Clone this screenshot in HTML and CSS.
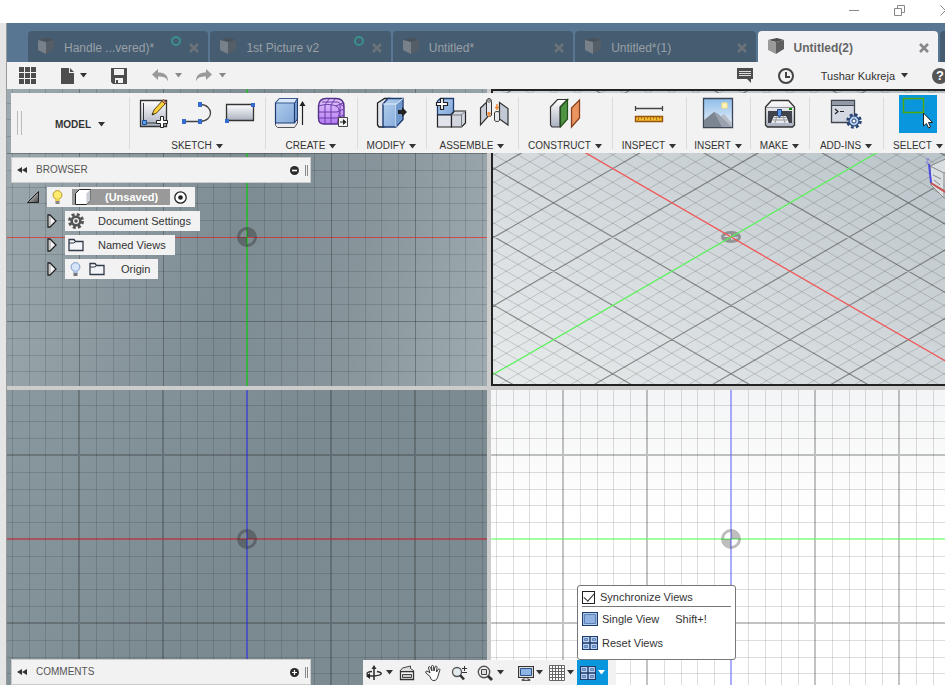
FILE: index.html
```html
<!DOCTYPE html>
<html lang="en">
<head>
<meta charset="utf-8">
<title>Untitled(2)</title>
<link rel="stylesheet" href="styles.css">
</head>
<body>
<svg class="defs" aria-hidden="true">
  <defs>
    <linearGradient id="steel" x1="0" y1="0" x2="0" y2="1"><stop offset="0" stop-color="#fff"/><stop offset="1" stop-color="#a9b0bf"/></linearGradient>
    <linearGradient id="blue" x1="0" y1="0" x2="1" y2="1"><stop offset="0" stop-color="#b4cfee"/><stop offset="1" stop-color="#7fa6d8"/></linearGradient>
    <linearGradient id="violet" x1="0" y1="0" x2="0" y2="1"><stop offset="0" stop-color="#e3c6fb"/><stop offset="1" stop-color="#b57af2"/></linearGradient>
    <linearGradient id="sky" x1="0" y1="0" x2="0" y2="1"><stop offset="0" stop-color="#8fbde8"/><stop offset="1" stop-color="#eef5fc"/></linearGradient>
    <linearGradient id="dark" x1="0" y1="0" x2="1" y2="1"><stop offset="0" stop-color="#eee"/><stop offset="1" stop-color="#444"/></linearGradient>
  </defs>
  <symbol id="caret" viewBox="0 0 7 5"><path d="M0 0h7L3.500 4.500z" fill="currentColor"/></symbol>
  <symbol id="cube" viewBox="0 0 16 16"><path d="M0 2 9 0l7 2-8 2z" fill="#4c4c4c"/><path d="M0 2l8 2v12l-8-4z" fill="#9a9a9a"/><path d="M8 4l8-2v9l-8 5z" fill="#5f5f5f"/></symbol>
  <symbol id="cross" viewBox="0 0 10 10"><path d="M1 1l8 8M9 1 1 9" stroke="currentColor" stroke-width="2.600"/></symbol>
  <symbol id="expand" viewBox="0 0 10 14"><path d="M1 1h2l6 6-6 6H1z" fill="#f4f4f4" stroke="#222" stroke-width="1.300"/><path d="M3 2v10" stroke="#999"/></symbol>
  <symbol id="folder" viewBox="0 0 16 14"><path d="M1 12.500V1.500h5l1.500 2H15v9z" fill="#f3f4f8" stroke="#333a4a" stroke-width="1.300"/><path d="M1 5h5l1.500-1.500" fill="none" stroke="#333a4a"/></symbol>
  <symbol id="rewind" viewBox="0 0 10 8"><path d="M5 1v6L0 4zM10 1v6L5 4z" fill="#333"/></symbol>
  <symbol id="quad" viewBox="0 0 16 14"><path d="M.5.5h15v13H.5z" fill="#bcd2ee" stroke="#1d3a6b" stroke-width="1.200"/><path d="M8 0v14M0 7h16" stroke="#1d3a6b" stroke-width="1.400"/><path d="M2.500 2.500h3v2h-3zM10.500 2.500h3v2h-3zM2.500 9.500h3v2h-3zM10.500 9.500h3v2h-3z" fill="#8fb2e0" stroke="#5e82b8"/></symbol>
</svg>

<header class="titlebar">
  <button aria-label="Minimize"><svg width="10" height="10"><path d="M0 5.500h10" stroke="#888"/></svg></button>
  <button aria-label="Restore"><svg width="11" height="11"><path d="M.5 3.500h7v7h-7zM3.500 3V.5h7v7H8" fill="none" stroke="#888"/></svg></button>
  <button aria-label="Close"><svg width="11" height="11"><path d="M.5.5l10 10M10.500.5l-10 10" stroke="#888"/></svg></button>
</header>

<div class="app">
  <nav class="tabs" aria-label="Documents">
    <div class="tab"><svg class="tab-cube"><use href="#cube"/></svg><a href="#handle">Handle ...vered)*</a><i class="sync"></i><button aria-label="Close tab"><svg width="10" height="10"><use href="#cross"/></svg></button></div>
    <div class="tab"><svg class="tab-cube"><use href="#cube"/></svg><a href="#first">1st Picture v2</a><i class="sync"></i><button aria-label="Close tab"><svg width="10" height="10"><use href="#cross"/></svg></button></div>
    <div class="tab"><svg class="tab-cube"><use href="#cube"/></svg><a href="#untitled">Untitled*</a><button aria-label="Close tab"><svg width="10" height="10"><use href="#cross"/></svg></button></div>
    <div class="tab"><svg class="tab-cube"><use href="#cube"/></svg><a href="#untitled1">Untitled*(1)</a><button aria-label="Close tab"><svg width="10" height="10"><use href="#cross"/></svg></button></div>
    <div class="tab active"><svg class="tab-cube"><use href="#cube"/></svg><a href="#untitled2">Untitled(2)</a><button aria-label="Close tab"><svg width="10" height="10"><use href="#cross"/></svg></button></div>
    <div class="tab"></div>
  </nav>

  <div class="quickbar">
    <button aria-label="Data panel"><svg width="17" height="17"><path d="M0 0h5v5H0zM6 0h5v5H6zM12 0h5v5h-5zM0 6h5v5H0zM6 6h5v5H6zM12 6h5v5h-5zM0 12h5v5H0zM6 12h5v5H6zM12 12h5v5h-5z" fill="#4d4d4d"/></svg></button>
    <button class="file" aria-label="File"><svg width="13" height="16"><path d="M0 0h8v5h5v11H0z" fill="#4d4d4d"/><path d="M9 0l4 4H9z" fill="#4d4d4d"/></svg><svg class="caret"><use href="#caret"/></svg></button>
    <button class="save" aria-label="Save"><svg width="16" height="16"><path d="M0 0h16v16H2l-2-2z" fill="#4d4d4d"/><path d="M3 1h10v6H3zM4 10h8v5H4z" fill="#f2f2f2"/><path d="M5 12h2v3H5z" fill="#4d4d4d"/></svg></button>
    <button class="undo" aria-label="Undo"><svg width="17" height="13"><path d="M0 5.500 6 0v3.500c6 0 10 2 10 9-1.500-4-4-5-10-5V11z" fill="#999"/></svg><svg class="caret"><use href="#caret"/></svg></button>
    <button class="redo" aria-label="Redo"><svg width="17" height="13"><path d="M16 5.500 10 0v3.500c-6 0-10 2-10 9 1.500-4 4-5 10-5V11z" fill="#999"/></svg><svg class="caret"><use href="#caret"/></svg></button>
    <span class="spacer"></span>
    <button aria-label="Notifications"><svg width="16" height="15"><path d="M0 0h16v11h-2v4l-4-4H0z" fill="#4d4d4d"/><path d="M2 3.500h12M2 5.500h12M2 7.500h12" stroke="#ddd"/></svg></button>
    <button class="clock" aria-label="Job status"><svg width="16" height="16"><circle cx="8" cy="8" r="7" fill="none" stroke="#444" stroke-width="2"/><path d="M8 4v5h4" fill="none" stroke="#444" stroke-width="2"/></svg></button>
    <button class="user">Tushar Kukreja<svg class="caret"><use href="#caret"/></svg></button>
    <button class="help" aria-label="Help">?</button>
  </div>

  <main class="workspace">
    <div class="viewports">
      <svg class="view shaded" data-grid="square" data-h="#f00" data-v="#0c0" data-thin="1" viewBox="-240 -148 480 297" preserveAspectRatio="xMinYMid slice"></svg>
      <svg class="view iso" data-grid="iso" viewBox="-238 -146 452 293" preserveAspectRatio="xMinYMid slice"></svg>
      <svg class="view dim" data-grid="square" data-h="#c31f2a" data-v="#2a2ae0" viewBox="-240 -149 480 295" preserveAspectRatio="xMinYMid slice"></svg>
      <svg class="view light" data-grid="square" data-h="#5f5" data-v="#66f" viewBox="-240 -149 454 295" preserveAspectRatio="xMinYMid slice"></svg>
    </div>

    <div class="overlay">
      <div class="ribbon">
        <div class="workspace-pick"><i class="grip"></i><button>MODEL<svg class="caret"><use href="#caret"/></svg></button></div>

        <div class="group">
          <div class="icons">
            <button aria-label="Create sketch"><svg width="32" height="32"><path d="M2.500 3.500h26v26h-26z" fill="url(#steel)" stroke="#333" stroke-width="1.300"/><path d="M5.500 6v18M8 26h15" stroke="#333" fill="none"/><path d="M4.500 23.500h4v4h-4z" fill="#5aa0e8" stroke="#1d4f9b"/><path d="M14 18l2-5L25 3l3 3-9.500 10z" fill="#fbd13a" stroke="#5a4310"/><path d="M24 4l1.500-1.500 3 3L27 7z" fill="#c9886c" stroke="#7c4a35"/><path d="M14 18l.8-2.200 1.400 1.400z" fill="#222"/><path d="M22.500 19.500h3v4h4v3h-4v4h-3v-4h-4v-3h4z" fill="#fff" stroke="#222"/></svg></button>
            <button aria-label="Spline"><svg width="32" height="32"><path d="M4 24.500h15c14 0 14-17 0-17" fill="none" stroke="#444" stroke-width="1.300"/><path d="M1 22h4v5H1zM17 22h4v5h-4zM17 5h4v5h-4z" fill="#356bcf"/></svg></button>
            <button aria-label="Rectangle"><svg width="32" height="32"><path d="M2.500 7.500h27v16h-27z" fill="url(#steel)" stroke="#333" stroke-width="1.300"/><path d="M1 22h4v4H1zM27 6h4v4h-4z" fill="#356bcf"/></svg></button>
          </div>
          <button class="label">SKETCH<svg class="caret"><use href="#caret"/></svg></button>
        </div>

        <div class="group">
          <div class="icons">
            <button aria-label="Extrude"><svg width="32" height="32"><path d="M1.500 25.500h19l3-4V26l-3 4.500h-17l-2-2z" fill="#e9e9ee" stroke="#555"/><path d="M1.500 6l4-4.500h18l-3 4.500v20h-19z" fill="url(#blue)" stroke="#1e3c72" stroke-width="1.200"/><path d="M20.500 6l3-4.500V22l-3 4z" fill="#7299cc" stroke="#1e3c72"/><path d="M1.500 6l4-4.500h18l-3 4.500z" fill="#d8e6f7" stroke="#3b5b90"/><path d="M28.500 28V6" stroke="#222" stroke-width="1.200"/><path d="M28.500 4l3 5h-6z" fill="#222"/></svg></button>
            <button aria-label="Create form"><svg width="32" height="32"><path d="M1.500 9C2 3 5 1.500 9 1.500h10c6 0 8 3 8 8V20c0 5-4 7-7 7H7c-4 0-5.500-2-5.500-6z" fill="url(#violet)" stroke="#53308c" stroke-width="1.400"/><path d="M2 9c6-2 11-2 17 0s2 12 1 18M2 15h18l7-3M2 21h18l7-3M8 8v19M14 8v19M19 9l7-3M5 5h16l6 5M8 8l4-6M14 8l4-6M23 7v18" fill="none" stroke="#6a3daa"/><path d="M21.500 20.500h9v9h-9z" fill="#f2f2f2" stroke="#444"/><path d="M23 24.500h3V22l3.500 3-3.500 3v-2.500h-3z" fill="#222"/></svg></button>
          </div>
          <button class="label">CREATE<svg class="caret"><use href="#caret"/></svg></button>
        </div>

        <div class="group">
          <div class="icons">
            <button aria-label="Press pull"><svg width="32" height="32"><path d="M1.500 6l7-4.500h5L8 7v23H3l-1.500-2z" fill="#e2e5ec" stroke="#222" stroke-width="1.300"/><path d="M7 7l5-5.500h15v21L20 30H7z" fill="url(#blue)" stroke="#1e3c72" stroke-width="1.400"/><path d="M7 7h13l7-5.500M20 7v23" fill="none" stroke="#e3eefb"/><path d="M20 8l6-5v19l-6 7z" fill="#6f98cd"/><path d="M22 13h4v-3l5 5-5 5v-3h-4z" fill="#222"/></svg></button>
          </div>
          <button class="label">MODIFY<svg class="caret"><use href="#caret"/></svg></button>
        </div>

        <div class="group">
          <div class="icons">
            <button aria-label="New component"><svg width="32" height="32"><path d="M2.500 18V4l3-2.500h13V15l-3 3z" fill="url(#blue)" stroke="#1e3c72" stroke-width="1.300"/><path d="M2.500 18h14v12h-14z" fill="#e0e3ea" stroke="#222" stroke-width="1.200"/><path d="M16.500 18l3-4h11v12l-4 4h-10z" fill="#d2d6df" stroke="#222" stroke-width="1.200"/><path d="M16.500 18h10v12M26.500 18l4-4" fill="none" stroke="#777"/><path d="M5.500 1.500h3v4h4v3h-4v4h-3v-4h-4v-3h4z" fill="#fff" stroke="#222" stroke-width="1.200"/></svg></button>
            <button aria-label="Joint"><svg width="32" height="32"><path d="M2.500 11l7-6.500V20l-7 8z" fill="#c9ced8" stroke="#333" stroke-width="1.200"/><path d="M8.500 4.500c0-4 5-4 5 0V18c0 2-5 2-5 0z" fill="#e6e8ed" stroke="#333"/><ellipse cx="11" cy="4" rx="1.500" ry="1.200" fill="#fff" stroke="#555"/><path d="M21.500 5.500l8.500 6V28l-8.500-6z" fill="#c3c9d4" stroke="#333" stroke-width="1.200"/><path d="M16.500 16c0-2 5-2 5 0v7c0 2-5 2-5 0z" fill="#e6e8ed" stroke="#333"/><path d="M11 15v5M9 16.500h4M19 7v6M17 10.500h4" stroke="#f5822a" stroke-width="1.400"/></svg></button>
          </div>
          <button class="label">ASSEMBLE<svg class="caret"><use href="#caret"/></svg></button>
        </div>

        <div class="group">
          <div class="icons">
            <button aria-label="Offset plane"><svg width="32" height="32"><path d="M1.500 10l7-7.500h10L11 10v20H3l-1.500-2z" fill="url(#steel)" stroke="#333" stroke-width="1.200"/><path d="M11.500 10l7-7.500V22l-7 8z" fill="#4f9443" stroke="#234f1d" stroke-width="1.200"/><path d="M22.500 11l8-8v18l-8 9z" fill="#ea9560" stroke="#87401b" stroke-width="1.300"/></svg></button>
          </div>
          <button class="label">CONSTRUCT<svg class="caret"><use href="#caret"/></svg></button>
        </div>

        <div class="group">
          <div class="icons">
            <button aria-label="Measure"><svg width="32" height="32"><path d="M2 11.500h28M2.500 9v5M29.500 9v5" stroke="#444" stroke-width="1.300"/><path d="M2.500 19.500h27v5h-27z" fill="#f3b92c" stroke="#96540f" stroke-width="1.400"/><path d="M5.500 20v3M8.500 20v2M11.500 20v3M14.500 20v2M17.500 20v3M20.500 20v2M23.500 20v3M26.500 20v2" stroke="#a87a1c"/></svg></button>
          </div>
          <button class="label">INSPECT<svg class="caret"><use href="#caret"/></svg></button>
        </div>

        <div class="group">
          <div class="icons">
            <button aria-label="Insert image"><svg width="32" height="32"><path d="M1.500 1.500h29v29h-29z" fill="url(#sky)" stroke="#3c4656" stroke-width="1.300"/><path d="M20 6h5v5h-5z" fill="#fff6c4" stroke="#ffe37a"/><path d="M14 23l8-6 8 9v4H14z" fill="#b7bcc6"/><path d="M2 23l10-8 4 2 13 13H2z" fill="#7d8492"/><path d="M12 15l4 2 13 13h-9z" fill="#9ba1ae"/></svg></button>
          </div>
          <button class="label">INSERT<svg class="caret"><use href="#caret"/></svg></button>
        </div>

        <div class="group">
          <div class="icons">
            <button aria-label="3D print"><svg width="32" height="32"><path d="M1.500 10l6-6.500h17l6 6.500v18l-2 2h-25l-2-2z" fill="url(#steel)" stroke="#333" stroke-width="1.300"/><path d="M2 10.500h28" stroke="#999"/><path d="M4 14h24v12H4z" fill="#3f434c"/><path d="M7 26l3-7h12l3 7z" fill="#e6e8ed"/><path d="M10 20.500h12M9 23h14M13 19l-2 7M19 19l2 7" stroke="#999"/><path d="M13.500 12.500h4v5l-2 3-2-3z" fill="#5e92dc" stroke="#1d3f7d"/><path d="M25 11h3v2h-3z" fill="#108a10"/></svg></button>
          </div>
          <button class="label">MAKE<svg class="caret"><use href="#caret"/></svg></button>
        </div>

        <div class="group">
          <div class="icons">
            <button aria-label="Scripts and add-ins"><svg width="32" height="32"><path d="M1.500 3.500h23v22h-23z" fill="#d3d8e2" stroke="#3f4652" stroke-width="1.300"/><path d="M2 4h22v4H2z" fill="#9299a6"/><path d="M2 8.500h22" stroke="#3f4652"/><path d="M5 12l3 2.500L5 17M10 14.500h4" fill="none" stroke="#222" stroke-width="1.200"/><circle cx="24" cy="24" r="6.500" fill="none" stroke="#264474" stroke-width="2.500" stroke-dasharray="2.800 2.300"/><circle cx="24" cy="24" r="5" fill="#b5cdee" stroke="#264474" stroke-width="1.200"/><circle cx="24" cy="24" r="2" fill="#fff" stroke="#264474"/></svg></button>
          </div>
          <button class="label">ADD-INS<svg class="caret"><use href="#caret"/></svg></button>
        </div>

        <div class="group select">
          <div class="icons">
            <button class="on" aria-label="Select"><svg width="38" height="38"><path d="M4.500 3.500h20v14h-20z" fill="none" stroke="#4fa80c" stroke-width="1.400"/><path d="M24.500 18v13l3-2.500 2 4.500 2-1-2-4.500h4z" fill="#fff" stroke="#222"/></svg></button>
          </div>
          <button class="label">SELECT<svg class="caret"><use href="#caret"/></svg></button>
        </div>
      </div>

      <section class="panel browser">
        <svg width="10" height="8"><use href="#rewind"/></svg><h2>BROWSER</h2>
        <button aria-label="Collapse browser"><svg width="9" height="9"><circle cx="4.500" cy="4.500" r="4.500" fill="#2b2b2b"/><path d="M2 4.500h5" stroke="#fff" stroke-width="1.600"/></svg></button><i class="handle"></i>
      </section>

      <ul class="tree">
        <li class="root">
          <svg width="12" height="12"><path d="M.5 11.500 11.500.5v11z" fill="url(#dark)" stroke="#222"/></svg>
          <div class="node">
            <svg class="bulb" width="11" height="15"><circle cx="5.500" cy="5" r="4.400" fill="#ffec6e" stroke="#b8962a"/><path d="M3 9h5v2H3z" fill="#f2cf4b"/><path d="M3.500 11h4v3h-4z" fill="#888"/></svg>
            <span class="name"><svg width="16" height="16"><path d="M.5 4.500l4-4h11v11l-4 4H.5z" fill="#fff" stroke="#222"/><path d="M11.500 4.500v11l4-4V.5z" fill="#c9ccd2"/></svg><b>(Unsaved)</b></span>
            <svg width="13" height="13"><circle cx="6.500" cy="6.500" r="5.700" fill="#fff" stroke="#222" stroke-width="1.300"/><circle cx="6.500" cy="6.500" r="2.300" fill="#222"/></svg>
          </div>
        </li>
        <li>
          <svg width="10" height="14"><use href="#expand"/></svg>
          <div class="node"><svg width="16" height="16"><circle cx="8" cy="8" r="6.500" fill="none" stroke="#555" stroke-width="3" stroke-dasharray="2.900 2.200"/><circle cx="8" cy="8" r="4.300" fill="#f2f2f2" stroke="#555" stroke-width="2.600"/><circle cx="8" cy="8" r="1.700" fill="#555"/></svg><a href="#settings">Document Settings</a></div>
        </li>
        <li>
          <svg width="10" height="14"><use href="#expand"/></svg>
          <div class="node"><svg width="16" height="14"><use href="#folder"/></svg><a href="#views">Named Views</a></div>
        </li>
        <li>
          <svg width="10" height="14"><use href="#expand"/></svg>
          <div class="node origin"><svg class="bulb" width="11" height="15"><circle cx="5.500" cy="5" r="4.400" fill="#d3e4fb" stroke="#7f97c4"/><path d="M3 9h5v2H3z" fill="#a9bfe3"/><path d="M3.500 11h4v3h-4z" fill="#777"/></svg><svg width="16" height="14"><use href="#folder"/></svg><a href="#origin">Origin</a></div>
        </li>
      </ul>

      <div class="bottom">
        <section class="panel">
          <svg width="10" height="8"><use href="#rewind"/></svg><h2>COMMENTS</h2>
          <button aria-label="Add comment"><svg width="9" height="9"><circle cx="4.500" cy="4.500" r="4.500" fill="#2b2b2b"/><path d="M2 4.500h5M4.500 2v5" stroke="#fff" stroke-width="1.200"/></svg></button><i class="handle"></i>
        </section>

        <div class="navbar">
          <button class="tool drop" aria-label="Orbit"><svg width="16" height="16"><path d="M8 1v14" stroke="#333" stroke-width="1.600"/><path d="M8 0l2.500 4h-5z" fill="#333"/><path d="M11 6.500c7 1 5 4-3 4.500-9 0-9-4-2-4.500M8 11H3" fill="none" stroke="#333" stroke-width="1.400"/><path d="M0 11l4-3v6z" fill="#222"/></svg><svg class="caret"><use href="#caret"/></svg></button>
          <button class="tool" aria-label="Look at"><svg width="16" height="16"><path d="M1.500 6.500h13v8h-13z" fill="#f6f6f6" stroke="#333" stroke-width="1.300"/><path d="M3.500 9.500h9v3h-9z" fill="#ccc" stroke="#444"/><path d="M1 6l2.500-3 8-2v2.500L15 6" fill="#ddd" stroke="#444"/></svg></button>
          <button class="tool" aria-label="Pan"><svg width="16" height="16"><path d="M5 11.500 1 8c-1-1.500.5-2.500 2-1.500l2 1.500L3.500 3c-.3-1.500 1.500-2 2-.5L7 6 6.500 1.500c0-1.500 2-1.500 2 0L9 6l1-4c.5-1.500 2-1 2 .3L11.500 7l1.700-2.500c.8-1.200 2-.5 1.600.7L13 11c-.5 2-1.200 4.500-4 4.500S6 14 5 11.500z" fill="#fff" stroke="#333"/></svg></button>
          <button class="tool" aria-label="Zoom"><svg width="16" height="16"><circle cx="6" cy="7" r="4.500" fill="#e3eaee" stroke="#555" stroke-width="1.300"/><path d="M9 10l4 4.500" stroke="#333" stroke-width="2.600"/><path d="M11 3.500h5M13.500 1v5M11 7.500h5" stroke="#333"/></svg></button>
          <button class="tool drop" aria-label="Fit"><svg width="16" height="16"><circle cx="7" cy="7" r="5.700" fill="#eef1f3" stroke="#555" stroke-width="1.400"/><path d="M4.500 4.500h5v5h-5z" fill="#ddd" stroke="#444"/><path d="M11 11l4 4" stroke="#333" stroke-width="2.800"/></svg><svg class="caret"><use href="#caret"/></svg></button>
          <button class="view-tool first" aria-label="Display settings"><svg width="16" height="16"><path d="M.5 1.500h15v11H.5z" fill="#e4e4e4" stroke="#333" stroke-width="1.200"/><path d="M2.500 3.500h11v7h-11z" fill="#8db4e6" stroke="#2d5288"/><path d="M6 13v1.500H4v1h8v-1h-2V13" fill="#ccc" stroke="#555"/></svg><svg class="caret"><use href="#caret"/></svg></button>
          <button class="view-tool" aria-label="Grid and snaps"><svg width="16" height="16"><path d="M.5.5h15v15H.5zM3.500 0v16M6.500 0v16M9.500 0v16M12.500 0v16M0 3.500h16M0 6.500h16M0 9.500h16M0 12.500h16" fill="#fff" stroke="#666"/></svg><svg class="caret"><use href="#caret"/></svg></button>
          <div class="viewports-control">
            <button class="view-tool on" aria-label="Viewports"><svg width="16" height="14"><use href="#quad"/></svg><svg class="caret"><use href="#caret"/></svg></button>
            <div class="menu">
              <label class="check"><input type="checkbox" checked>Synchronize Views</label>
              <hr>
              <button><svg width="16" height="14"><path d="M.5.5h15v13H.5z" fill="#b3cdec" stroke="#1d3a6b" stroke-width="1.200"/><path d="M2.500 2.500h11v9h-11z" fill="#8fb2e0" stroke="#5e82b8"/></svg>Single View<kbd>Shift+!</kbd></button>
              <button><svg width="16" height="14"><use href="#quad"/></svg>Reset Views</button>
            </div>
          </div>
        </div>
      </div>
    </div>
  </main>
</div>
<script src="grid.js"></script>
</body>
</html>
```

FILE: styles.css
```css
* { box-sizing: border-box; }

body {
  margin: 0;
  height: 100vh;
  display: flex;
  flex-direction: column;
  overflow: hidden;
  background: #fff;
  color: #333;
  font: 11px/14px "Liberation Sans", Arial, sans-serif;
}

button {
  display: flex;
  align-items: center;
  padding: 0;
  border: 0;
  background: none;
  color: inherit;
  font: inherit;
}

a { color: inherit; text-decoration: none; }
svg { display: block; flex: none; }
.defs { position: absolute; width: 0; height: 0; }
.caret { width: 7px; height: 5px; }
.spacer { flex: 1; }

/* Window frame */
.titlebar {
  flex: none;
  height: 23px;
  display: flex;
  justify-content: flex-end;
  align-items: flex-start;
  gap: 35px;
  padding-top: 5px;
  margin-right: -6px;
}

.app {
  flex: 1;
  min-width: 0;
  min-height: 0;
  margin-left: 6px;
  border-left: 1px solid #999;
  box-shadow: -6px 0 0 #e5e5e5;
  display: flex;
  flex-direction: column;
}

/* Document tabs */
.tabs {
  flex: none;
  display: flex;
  gap: 2px;
  height: 39px;
  padding: 8px 0 0 21px;
  background: #587591;
  overflow: hidden;
  font-size: 12px;
}

.tab {
  flex: 0 0 calc(20% - 3px);
  display: flex;
  align-items: center;
  padding: 2px 9px 0 10px;
  border-radius: 4px 4px 0 0;
  background: #465c71;
  color: #99a0a6;
}

.tab a { flex: 1; }
.tab button { color: #6a727a; }
.tab-cube { width: 16px; height: 16px; margin: 0 10px 4px 0; opacity: .6; }
.sync { width: 10px; height: 10px; margin: 0 8px 14px 0; border: 2px solid #3a9188; border-radius: 50%; }
.tab.active { background: #f2f2f5; color: #666; font-weight: bold; }
.tab.active button { color: #888; }
.tab.active .tab-cube { opacity: 1; }

/* Quick access bar */
.quickbar {
  flex: none;
  display: flex;
  align-items: center;
  height: 27px;
  padding-left: 12px;
  background: #f2f2f2;
  overflow: hidden;
}

.quickbar button { flex: none; gap: 6px; }
.quickbar .file { margin-left: 25px; }
.quickbar .save { margin-left: 24px; }
.quickbar .undo { margin-left: 25px; color: #888; }
.quickbar .redo { margin-left: 14px; color: #888; }
.quickbar .clock { margin-left: 25px; }
.quickbar .user { margin-left: 27px; }
.quickbar .help {
  justify-content: center;
  width: 16px;
  height: 16px;
  margin: 0 -3px 0 24px;
  border-radius: 50%;
  background: #555;
  color: #fff;
  font-size: 13px;
  font-weight: bold;
}

/* Viewports */
.workspace { flex: 1; min-height: 0; display: flex; position: relative; }

.viewports {
  flex: 1;
  display: grid;
  grid-template: minmax(0, 297fr) minmax(0, 295fr) / minmax(0, 480fr) minmax(0, 454fr);
  gap: 4px;
  background: #ccc;
}

.view { width: 100%; height: 100%; overflow: hidden; }
.shaded { background: linear-gradient(100deg, #9ca9af 0%, #7d8c92 48%, #87959b 72%, #9eabb1 100%); }
.dim { background: linear-gradient(120deg, #8a999f, #7b8a91 50%, #7d8c93); }
.iso { background: linear-gradient(30deg, #e8ebec, #d3d9dc 45%, #b3bec3); border: solid #222; border-width: 2px 0 2px 2px; }
.light { background: linear-gradient(#f4f5f6, #fff 45%); }

/* Panels laid over the viewports */
.overlay {
  position: absolute;
  inset: 4px 0 0 4px;
  display: flex;
  flex-direction: column;
  align-items: flex-start;
}

.ribbon {
  align-self: stretch;
  display: grid;
  grid-template-columns: 118fr 136fr 92fr 69fr 92fr 94fr 74fr 64fr 59fr 74fr 62fr;
  height: 60px;
  background: #f2f2f2;
  font-size: 10px;
  line-height: 12px;
}

.workspace-pick { display: flex; align-items: center; padding-left: 6px; }
.workspace-pick button { margin-left: 33px; padding-top: 3px; gap: 7px; font-weight: bold; }
.grip { width: 5px; height: 24px; border: solid #bbb; border-width: 0 1px; }

.group {
  min-width: 0;
  display: flex;
  flex-direction: column;
  align-items: center;
  justify-content: space-between;
  padding: 4px 0 1px;
  background: linear-gradient(#dcdcdc, #dcdcdc) 0 4px / 1px 52px no-repeat;
}

.icons { display: flex; gap: 11px; }
.label { gap: 4px; }
.select { padding: 2px 0 1px 8px; }
.on { background: #0a96dc; }

.panel {
  display: flex;
  align-items: center;
  width: 300px;
  height: 26px;
  padding: 0 2px 0 5px;
  border: 1px solid #ccc;
  background: #f2f2f2;
}

.panel h2 { flex: 1; margin: 0 0 0 9px; font-size: 10px; font-weight: normal; color: #555; }
.handle { width: 3px; height: 11px; margin-left: 6px; border: solid #888; border-width: 0 1px; }
.browser { margin-top: 4px; }

/* Browser tree */
.tree {
  display: flex;
  flex-direction: column;
  gap: 4px;
  margin: 4px 0 0;
  padding: 0 0 0 36px;
  list-style: none;
}

.tree li { display: flex; align-items: center; gap: 8px; }
.tree .root { margin-left: -20px; }
.node {
  display: flex;
  align-items: center;
  height: 20px;
  padding: 0 9px 0 3px;
  background: #f2f2f2;
}
.node a { margin-left: 14px; }
.root .node { padding: 0 8px 0 5px; }
.root .name {
  display: flex;
  align-items: center;
  height: 16px;
  margin: 0 4px 0 9px;
  padding: 0 12px 0 3px;
  gap: 14px;
  background: #999;
  color: #fff;
}
.origin { padding: 0 8px 0 5px; gap: 8px; }
.origin a { margin-left: 8px; }

/* Bottom row */
.bottom { display: flex; align-items: flex-end; margin-top: auto; }
.navbar { display: flex; height: 25px; margin-left: 52px; padding-right: 8px; background: #f2f2f2; }
.tool { padding: 0 5px; gap: 4px; }
.tool.drop { padding-right: 1px; }
.tool:first-child { padding-left: 3px; }
.view-tool { height: 100%; padding: 0 3px; gap: 2px; }
.view-tool.first { margin-left: 10px; }
.view-tool.on { color: #fff; }
.viewports-control { position: relative; }

.menu {
  position: absolute;
  left: 0;
  bottom: 100%;
  width: 159px;
  padding: 4px;
  border: 1px solid #777;
  border-radius: 3px;
  background: #fff;
}

.menu .check { display: flex; align-items: center; gap: 5px; }
.menu input {
  appearance: none;
  width: 13px;
  height: 13px;
  margin: 0;
  border: 1px solid #222;
  display: grid;
  place-items: center;
}
.menu input:checked::before {
  content: "";
  width: 9px;
  height: 5px;
  margin-bottom: 3px;
  border: solid #333;
  border-width: 0 0 1px 1px;
  transform: rotate(-48deg);
}
.menu hr { margin: 2px 0 0; border: 0; border-top: 1px solid #777; }
.menu button { width: 100%; height: 24px; gap: 4px; }
.menu kbd { margin-left: 12px; font: inherit; }
```

FILE: grid.js
```js
const NS = "http://www.w3.org/2000/svg";
const REACH = 1680;

function add(svg, tag, attrs) {
  const el = document.createElementNS(NS, tag);
  for (const key in attrs) el.setAttribute(key, attrs[key]);
  svg.append(el);
}

// Quartered origin disc; ry < rx flattens it for the perspective view.
function origin(svg, rx, ry, opacity) {
  add(svg, "ellipse", { rx: rx - 1.5, ry: ry - 1.5, fill: "none", stroke: "#333", "stroke-width": 3, "stroke-opacity": opacity });
  const a = rx - 3, b = ry - 3;
  add(svg, "path", {
    d: `M0 0V${-b}A${a} ${b} 0 0 1 ${a} 0zM0 0V${b}A${a} ${b} 0 0 1 ${-a} 0z`,
    fill: "#333", "fill-opacity": opacity
  });
}

function square(svg) {
  const { h, v, thin } = svg.dataset;
  let minor = "", major = "";
  for (let i = -100; i <= 100; i++) {
    if (i === 0) continue;
    const p = i % 5 ? Math.round(i * 16.8) + 0.5 : i / 5 * 84 + (thin ? 0.5 : 0);
    const line = `M${p} ${-REACH}V${REACH}M${-REACH} ${p}H${REACH}`;
    if (i % 5) minor += line; else major += line;
  }
  add(svg, "path", { d: minor, stroke: "#000", "stroke-opacity": 0.13 });
  add(svg, "path", { d: major, stroke: "#222", "stroke-width": thin ? 1 : 2, "stroke-opacity": thin ? 0.35 : 0.27 });
  add(svg, "path", { d: thin ? `M${-REACH} .5H${REACH}` : `M${-REACH} 0H${REACH}`, stroke: h, "stroke-width": thin ? 1 : 2, "stroke-opacity": 0.55 });
  add(svg, "path", { d: `M0 ${-REACH}V${REACH}`, stroke: v, "stroke-width": 2, "stroke-opacity": 0.55 });
  origin(svg, 10, 10, svg.classList.contains("light") ? 0.32 : 0.42);
}

function iso(svg) {
  const slope = 68.4 / 118.3, rise = REACH * slope;
  let minor = "", major = "";
  for (let i = -100; i <= 100; i++) {
    if (i === 0) continue;
    const y = i * 13.68;
    const lines = `M${-REACH} ${y - rise}L${REACH} ${y + rise}M${-REACH} ${y + rise}L${REACH} ${y - rise}`;
    if (i % 5) minor += lines; else major += lines;
  }
  add(svg, "path", { d: minor, stroke: "#000", "stroke-opacity": 0.15 });
  add(svg, "path", { d: major, stroke: "#222", "stroke-opacity": 0.45, "stroke-width": 1.2 });
  origin(svg, 10, 6, 0.4);
  add(svg, "path", { d: `M${-REACH} ${-rise}L${REACH} ${rise}`, stroke: "#f05858", "stroke-width": 1.3 });
  add(svg, "path", { d: `M${-REACH} ${rise}L${REACH} ${-rise}`, stroke: "#5cf05c", "stroke-width": 1.3 });
  // View cube
  add(svg, "path", { d: "M199-71l20-9v42l-6-1-13-13z", fill: "#d8dde0", stroke: "#888" });
  add(svg, "path", { d: "M199-71l14 7v25M213-64l6-3M202-62l8 4M203-57l6 5", fill: "none", stroke: "#888" });
  add(svg, "path", { d: "M198-73l2 19", stroke: "#4c4ce0", "stroke-width": 2 });
  add(svg, "path", { d: "M200-54l16 10", stroke: "#c85050", "stroke-width": 2 });
  add(svg, "path", { d: "M195-78h3l-3 4h3", fill: "none", stroke: "#7a7ae0" });
}

document.querySelectorAll(".view").forEach(svg => (svg.dataset.grid === "iso" ? iso : square)(svg));
```
